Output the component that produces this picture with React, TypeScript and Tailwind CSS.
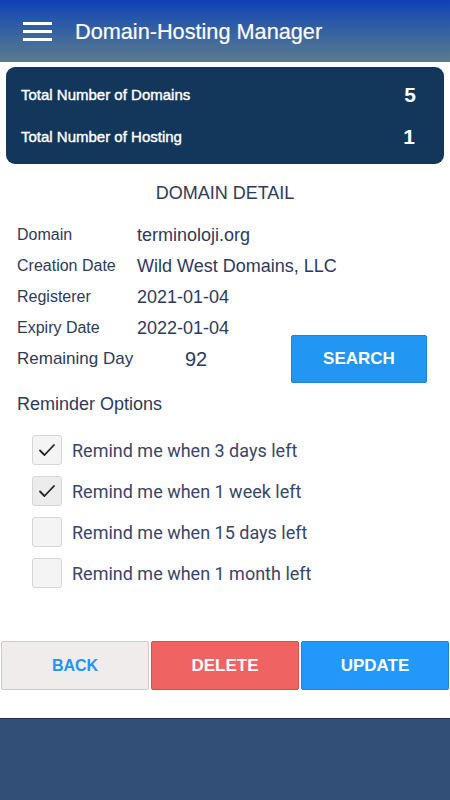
import React from "react";

const rows: [string, string][] = [
  ["Domain", "terminoloji.org"],
  ["Creation Date", "Wild West Domains, LLC"],
  ["Registerer", "2021-01-04"],
  ["Expiry Date", "2022-01-04"],
];

const reminders: [string, boolean][] = [
  ["Remind me when 3 days left", true],
  ["Remind me when 1 week left", true],
  ["Remind me when 15 days left", false],
  ["Remind me when 1 month left", false],
];

function Check() {
  return (
    <svg width="18" height="14" viewBox="0 0 18 14" fill="none">
      <path d="M2 7.5 L6.5 12 L16 2" stroke="#222" strokeWidth="1.8" strokeLinecap="round" strokeLinejoin="round" />
    </svg>
  );
}

export default function App() {
  return (
    <div className="w-[450px] h-[800px] flex flex-col bg-white overflow-hidden" style={{ fontFamily: '"Liberation Sans", Arial, sans-serif' }}>
      <div className="h-[62px] shrink-0 flex items-center bg-gradient-to-b from-[#0f3fb5] to-[#5d7b8c]">
        <div className="ml-[23px] w-[29px] flex flex-col gap-[5px]">
          <div className="h-[3px] bg-white" />
          <div className="h-[3px] bg-white" />
          <div className="h-[3px] bg-white" />
        </div>
        <div className="ml-[23px] text-white text-[21.7px] leading-none mt-[1px] [-webkit-text-stroke:0.2px_white]">Domain-Hosting Manager</div>
      </div>
      <div className="mx-[6px] mt-[5px] h-[97px] shrink-0 rounded-[9px] bg-[#13365b] px-[15px] flex flex-col justify-center gap-[22px] text-white">
        <div className="flex items-center justify-between">
          <span className="text-[15px] leading-5 [-webkit-text-stroke:0.4px_white]">Total Number of Domains</span>
          <span className="text-[21px] font-bold leading-5 mr-[13px]">5</span>
        </div>
        <div className="flex items-center justify-between">
          <span className="text-[15px] leading-5 [-webkit-text-stroke:0.4px_white]">Total Number of Hosting</span>
          <span className="text-[21px] font-bold leading-5 mr-[14px]">1</span>
        </div>
      </div>
      <div className="text-center text-[18px] text-[#2e3a59] mt-[19px] leading-5">DOMAIN DETAIL</div>
      <div className="mt-[22px] px-[17px] flex flex-col gap-[11px] text-[#2e3a59]">
        {rows.map(([k, v]) => (
          <div key={k} className="flex items-center h-5">
            <span className="w-[120px] text-[16px]">{k}</span>
            <span className="text-[18px]">{v}</span>
          </div>
        ))}
      </div>
      <div className="flex items-center px-[17px] -mt-[3px]">
        <span className="w-[168px] text-[17px] text-[#2e3a59]">Remaining Day</span>
        <span className="text-[20px] text-[#2e3a59]">92</span>
        <button className="ml-auto mr-[6px] w-[136px] h-[48px] bg-[#2196f3] border border-[#1a86dd] rounded-[2px] text-white font-bold text-[17px]">SEARCH</button>
      </div>
      <div className="px-[17px] mt-[11px] text-[18px] text-[#2e3a59] leading-5">Reminder Options</div>
      <div className="mt-[21px] pl-[32px] flex flex-col gap-[11px]" style={{ fontFamily: 'Roboto, "Liberation Sans", sans-serif' }}>
        {reminders.map(([t, c], i) => (
          <div key={t} className="flex items-center h-[30px]">
            <div className={`w-[30px] h-[30px] rounded-[3px] border border-[#d6d6d6] flex items-center justify-center ${i === 1 ? "bg-[#ececec]" : "bg-[#f4f4f4]"}`}>
              {c && <Check />}
            </div>
            <span className="ml-[10px] text-[18px] text-[#3a4568]">{t}</span>
          </div>
        ))}
      </div>
      <div className="mt-[53px] flex gap-[2px] px-[1px]">
        <button className="flex-1 h-[49px] bg-[#f0ecec] border border-[#cfcccc] rounded-[2px] text-[#2196f3] font-bold text-[16px]">BACK</button>
        <button className="flex-1 h-[49px] bg-[#ef6363] border border-[#d94c4c] rounded-[2px] text-white font-bold text-[17px]">DELETE</button>
        <button className="flex-1 h-[49px] bg-[#2299fa] border border-[#1a86dd] rounded-[2px] text-white font-bold text-[17px]">UPDATE</button>
      </div>
      <div className="mt-[28px] flex-1 bg-[#324f78] border-t border-[#1c2f52]" />
    </div>
  );
}
